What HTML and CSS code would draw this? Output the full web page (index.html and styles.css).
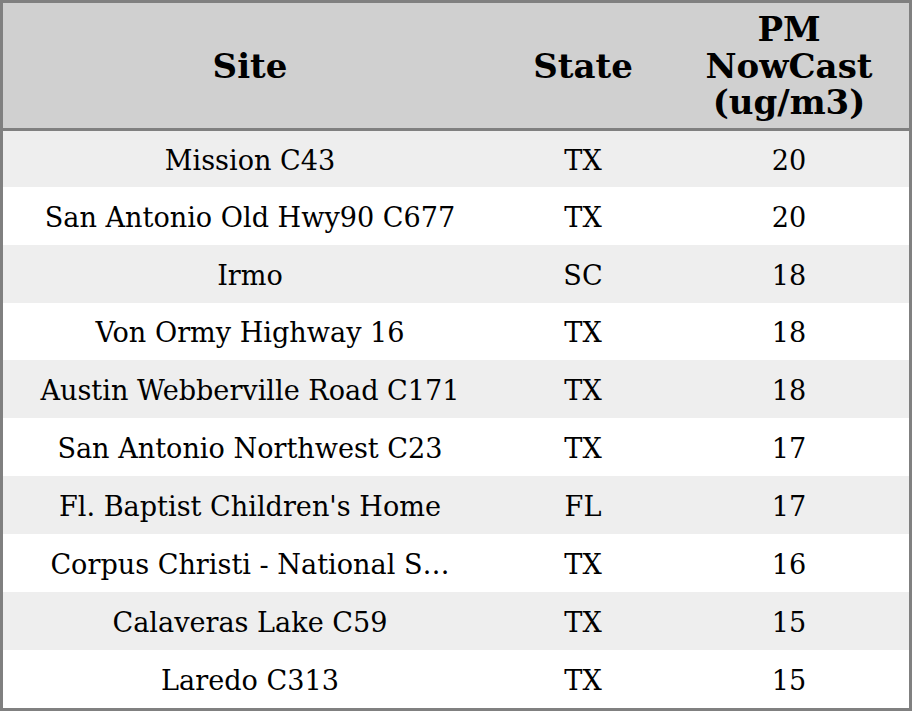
FILE: index.html
```html
<!DOCTYPE html>
<html>
<head>
<meta charset="utf-8">
<link rel="stylesheet" href="styles.css">
</head>
<body>
<div class="table">
  <div class="row head">
    <div class="cell">Site</div>
    <div class="cell">State</div>
    <div class="cell">PM<br>NowCast<br>(ug/m3)</div>
  </div>
  <div class="row odd first"><div class="cell">Mission C43</div><div class="cell">TX</div><div class="cell">20</div></div>
  <div class="row"><div class="cell">San Antonio Old Hwy90 C677</div><div class="cell">TX</div><div class="cell">20</div></div>
  <div class="row odd"><div class="cell">Irmo</div><div class="cell">SC</div><div class="cell">18</div></div>
  <div class="row"><div class="cell">Von Ormy Highway 16</div><div class="cell">TX</div><div class="cell">18</div></div>
  <div class="row odd"><div class="cell">Austin Webberville Road C171</div><div class="cell">TX</div><div class="cell">18</div></div>
  <div class="row"><div class="cell">San Antonio Northwest C23</div><div class="cell">TX</div><div class="cell">17</div></div>
  <div class="row odd"><div class="cell">Fl. Baptist Children's Home</div><div class="cell">FL</div><div class="cell">17</div></div>
  <div class="row"><div class="cell">Corpus Christi - National S…</div><div class="cell">TX</div><div class="cell">16</div></div>
  <div class="row odd"><div class="cell">Calaveras Lake C59</div><div class="cell">TX</div><div class="cell">15</div></div>
  <div class="row"><div class="cell">Laredo C313</div><div class="cell">TX</div><div class="cell">15</div></div>
</div>
</body>
</html>
```
FILE: styles.css
```css
html, body {
  margin: 0;
  padding: 0;
  background: #ffffff;
}
.table {
  box-sizing: border-box;
  width: 912px;
  height: 711px;
  border: 3px solid #808080;
  display: flex;
  flex-direction: column;
  font-family: "DejaVu Serif", serif;
  color: #000;
}
.row {
  box-sizing: border-box;
  display: grid;
  grid-template-columns: 494px 172px 240px;
  height: 57.95px;
  padding-top: 3px;
  background: #ffffff;
  font-size: 27.1px;
}
.row.odd {
  background: #eeeeee;
}
.row.first {
  height: 55.7px;
}
.row.head {
  height: 128px;
  padding-top: 1px;
  background: #d0d0d0;
  border-bottom: 3px solid #808080;
  font-weight: bold;
  font-size: 34px;
  line-height: 36.7px;
}
.cell {
  display: flex;
  align-items: center;
  justify-content: center;
  text-align: center;
  white-space: nowrap;
}
```
